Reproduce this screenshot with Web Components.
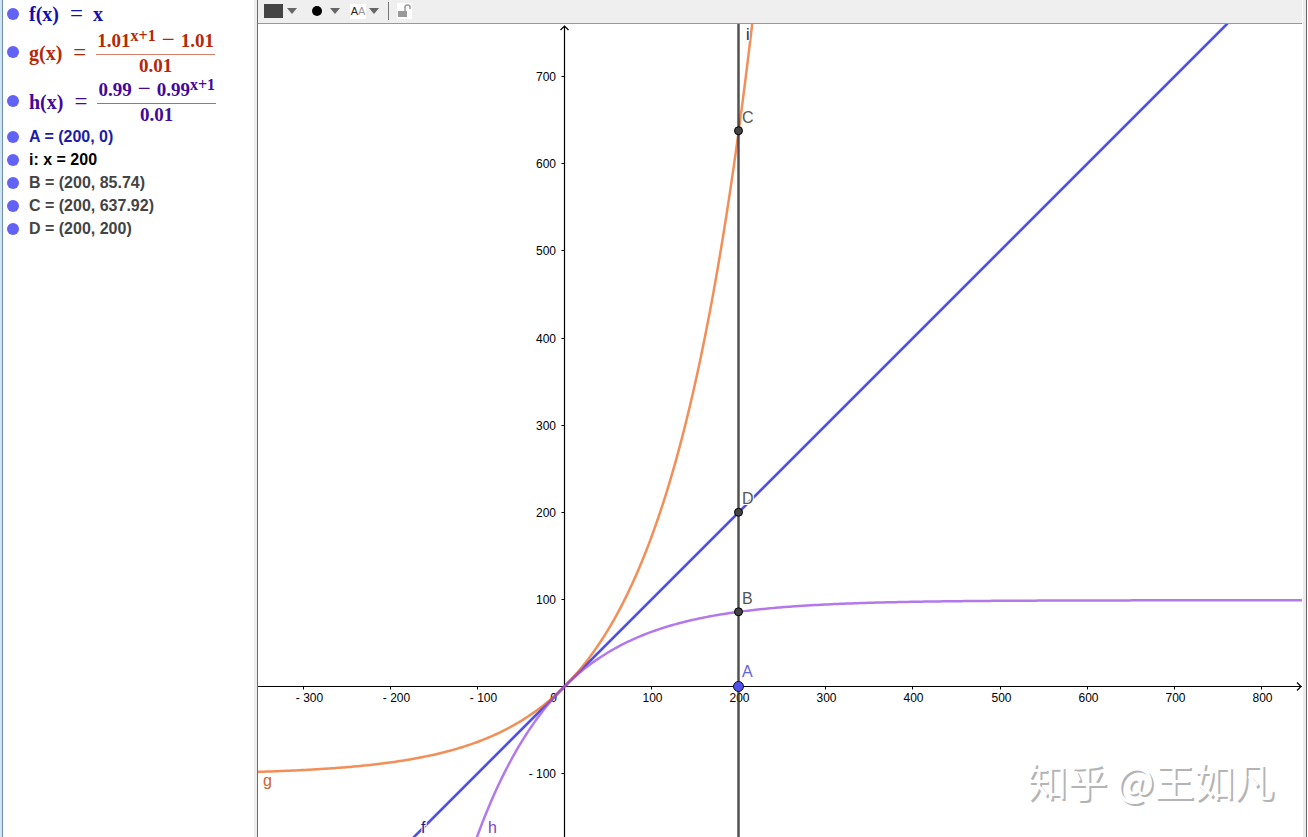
<!DOCTYPE html>
<html lang="en">
<head>
<meta charset="utf-8">
<title>Graphing calculator</title>
<style>
html, body { margin: 0; height: 100%; }
body { font-family: "Liberation Sans", Arial, sans-serif; background: #fff; overflow: hidden; }
</style>
</head>
<body>
<graph-app>
  <algebra-view slot="side">
    <algebra-row kind="math" color="#1010b0"><math-side>f(x)</math-side><math-side>x</math-side></algebra-row>
    <algebra-row kind="tall" color="#b42808"><math-side>g(x)</math-side><math-fraction><span slot="top">1.01<math-power>x+1</math-power><math-minus>−</math-minus>1.01</span><span slot="bottom">0.01</span></math-fraction></algebra-row>
    <algebra-row kind="tall" color="#44089a"><math-side>h(x)</math-side><math-fraction><span slot="top">0.99<math-minus>−</math-minus>0.99<math-power>x+1</math-power></span><span slot="bottom">0.01</span></math-fraction></algebra-row>
    <algebra-row color="#1c1ca8">A = (200, 0)</algebra-row>
    <algebra-row color="#000000">i: x = 200</algebra-row>
    <algebra-row color="#444444">B = (200, 85.74)</algebra-row>
    <algebra-row color="#444444">C = (200, 637.92)</algebra-row>
    <algebra-row color="#444444">D = (200, 200)</algebra-row>
  </algebra-view>
  <style-bar slot="bar"></style-bar>
  <graph-plot slot="plot"></graph-plot>
  <water-mark slot="mark">知乎 @王如凡</water-mark>
</graph-app>
<script>
function define(name, html, ready) {
  customElements.define(name, class extends HTMLElement {
    constructor() {
      super();
      this.attachShadow({ mode: "open" }).innerHTML = html;
    }
    connectedCallback() { if (ready) ready(this, this.shadowRoot); }
  });
}

define("graph-app", `
<style>
:host { display: grid; grid-template-columns: 258px minmax(0, 1fr) 6px; height: 100vh; }
aside { box-sizing: border-box; border-left: 2px solid #cfe3f3; border-right: 1px solid #6c6c6c; min-width: 0; }
.inner { height: 100%; box-sizing: border-box; border-left: 1px solid #6c8fae; border-right: 3px solid #ededed; }
main { display: flex; flex-direction: column; min-width: 0; min-height: 0; position: relative; }
.plot { flex: 1; min-height: 0; display: flex; }
.mark { position: absolute; right: 28px; bottom: 27px; }
.edge { box-sizing: border-box; margin-left: 1px; background: #ececec; border-right: 1px solid #666; width: 4px; }
</style>
<aside><div class="inner"><slot name="side"></slot></div></aside>
<main><slot name="bar"></slot><div class="plot"><slot name="plot"></slot></div><div class="mark"><slot name="mark"></slot></div></main>
<div class="edge"></div>`);

define("algebra-view", `
<style>:host { display: flex; flex-direction: column; }</style><slot></slot>`);

define("algebra-row", `
<style>
:host { display: flex; align-items: center; height: 23px; padding-left: 4px; gap: 10px; font-weight: bold; font-size: 16px; line-height: 20px; white-space: nowrap; }
:host([kind]) { font-family: "Liberation Serif", serif; font-size: 20px; }
:host([kind="math"]) { height: 27px; }
:host([kind="tall"]) { height: 49px; }
:host([kind="tall"]) .body { padding-top: 2px; }
button { flex: none; width: 12px; height: 12px; padding: 0; border: 0; border-radius: 50%; background: #6262f4; }
.body { display: flex; align-items: center; }
</style>
<button type="button" aria-label="Show or hide"></button><div class="body"><slot></slot></div>`,
(el, root) => { root.querySelector(".body").style.color = el.getAttribute("color"); });

define("math-side", `
<style>
:host { display: flex; align-items: center; }
.eq { font-weight: normal; font-size: 23px; margin: 0 10px 0 11px; }
:host(:last-child) .eq { display: none; }
</style><slot></slot><span class="eq">=</span>`);

define("math-fraction", `
<style>
:host { display: flex; flex-direction: column; align-items: center; font-size: 19px; }
.top { height: 25px; line-height: 23px; padding: 0 1px; }
.bottom { height: 22px; line-height: 22px; }
.bar { align-self: stretch; height: 1px; background: currentColor; opacity: .6; }
</style><div class="top"><slot name="top"></slot></div><div class="bar"></div><div class="bottom"><slot name="bottom"></slot></div>`);

define("math-power", `
<style>:host { display: inline-block; font-size: 16px; line-height: 14px; vertical-align: 6px; }</style><slot></slot>`);

define("math-minus", `
<style>:host { display: inline-block; font-size: 23px; font-weight: normal; line-height: 14px; margin: 0 6px; }</style><slot></slot>`);

define("style-bar", `
<style>
:host { display: flex; align-items: flex-start; height: 23px; flex: none; background: #efefef; border-bottom: 1px solid #999; padding: 0 6px; box-sizing: content-box; }
button { border: 0; padding: 0; background: none; font: inherit; display: flex; align-items: center; height: 22px; }
.drop { gap: 4px; }
.swatch { width: 19px; height: 14px; background: #444; }
.dot { width: 10px; height: 10px; border-radius: 50%; background: #000; }
.point { margin-left: 15px; gap: 8px; }
.text { margin-left: 10px; gap: 3px; }
.aa { background: #fff; font-size: 11px; line-height: 15px; color: #222; width: 16px; }
.aa span { color: #999; }
.sep { width: 1px; height: 18px; background: #777; margin: 2px 8px 0 9px; }
.lock svg { background: #fff; }
</style>
<button type="button" class="drop" aria-label="Colour"><span class="swatch"></span><svg width="10" height="6"><path d="M0 0H10L5 6Z" fill="#666"/></svg></button>
<button type="button" class="drop point" aria-label="Point style"><span class="dot"></span><svg width="10" height="6"><path d="M0 0H10L5 6Z" fill="#666"/></svg></button>
<button type="button" class="drop text" aria-label="Text style"><span class="aa">A<span>A</span></span><svg width="10" height="6"><path d="M0 0H10L5 6Z" fill="#666"/></svg></button>
<span class="sep"></span>
<button type="button" class="lock" aria-label="Lock"><svg width="15" height="16"><path d="M1 8H10V14H1Z" fill="#999"/><path d="M8 8V4Q8 2 10.500 2Q13 2 13 4V6" fill="none" stroke="#999" stroke-width="1.500"/></svg></button>`);

define("graph-plot", `
<style>
:host { display: block; flex: 1; min-width: 0; overflow: hidden; }
svg { display: block; width: 100%; height: 100%; }
text { font-family: "Liberation Sans", Arial, sans-serif; }
.num { font-size: 12px; fill: #000; }
.name { font-size: 16px; paint-order: stroke; stroke: #fff; stroke-width: 2px; }
</style><svg role="img" aria-label="Graph of f, g and h"></svg>`,
(el, root) => {
  const svg = root.querySelector("svg");
  const ox = 306.5, oy = 662.5, k = 0.8712;
  const X = x => ox + x * k, Y = y => oy - y * k;
  const label = (t, x, y, c) => `<text class="name" x="${x}" y="${y}" fill="${c}">${t}</text>`;
  function draw() {
    const w = el.clientWidth, h = el.clientHeight;
    const curve = (fn, c) => {
      let d = "";
      for (let px = -2; px <= w + 2; px += 2) {
        const y = Y(fn((px - ox) / k));
        if (y > -400 && y < h + 400) d += (d ? "L" : "M") + px + " " + y.toFixed(2);
      }
      return `<path d="${d}" fill="none" stroke="${c}" stroke-width="2.5" stroke-opacity=".75"/>`;
    };
    let s = `<path d="M0 ${oy}H${w}M${ox} 2V${h}M${ox - 4} 6L${ox} 2L${ox + 4} 6M${w - 5} ${oy - 4}L${w - 1} ${oy}L${w - 5} ${oy + 4}" fill="none" stroke="#000" stroke-width="1.2"/>`;
    for (let v = -1000; v <= 3000; v += 100) {
      if (!v) continue;
      const x = Math.floor(X(v)) + 0.5, y = Math.floor(Y(v)) + 0.5;
      const t = v < 0 ? "- " + -v : v;
      if (x > 0 && x < w) s += `<path d="M${x} ${oy}v3" stroke="#000"/><text class="num" text-anchor="middle" x="${x + (v < 0 ? 6 : 1)}" y="${oy + 15.5}">${t}</text>`;
      if (y > 0 && y < h) s += `<path d="M${ox} ${y}h-3" stroke="#000"/><text class="num" text-anchor="end" x="${ox - 8.5}" y="${y + 4.5}">${t}</text>`;
    }
    s += `<text class="num" text-anchor="end" x="${ox - 7.5}" y="${oy + 15.5}">0</text>`;
    s += curve(x => x, "#1515e0");
    s += curve(x => (1.01 ** (x + 1) - 1.01) / 0.01, "#ee6820");
    s += curve(x => (0.99 - 0.99 ** (x + 1)) / 0.01, "#9a4ce4");
    const lx = Math.floor(X(200)) + 0.5;
    s += `<path d="M${lx} 0V${h}" stroke="#333" stroke-opacity=".85" stroke-width="2.5"/>`;
    s += label("i", 488, 16, "#222") + label("C", 484, 99, "#555") + label("D", 484, 480, "#555") + label("B", 484, 580, "#555") + label("A", 484, 653, "#6464dc");
    s += label("g", 5, 762, "#d0622c") + label("f", 163, 809, "#1a1a80") + label("h", 230, 809, "#8040b8");
    for (const v of [637.92, 200, 85.74]) s += `<circle cx="${lx}" cy="${Y(v)}" r="4" fill="#444" stroke="#000"/>`;
    s += `<circle cx="${lx}" cy="${oy}" r="5" fill="#5050ee" stroke="#111"/>`;
    svg.innerHTML = s;
  }
  draw();
  new ResizeObserver(draw).observe(el);
});

define("water-mark", `
<style>:host { display: block; font-family: "Noto Sans CJK SC", sans-serif; font-size: 40px; line-height: 60px; color: #fff; text-shadow: 2px 2px 0 #b4b4b4; white-space: nowrap; }</style><slot></slot>`);
</script>
</body>
</html>
